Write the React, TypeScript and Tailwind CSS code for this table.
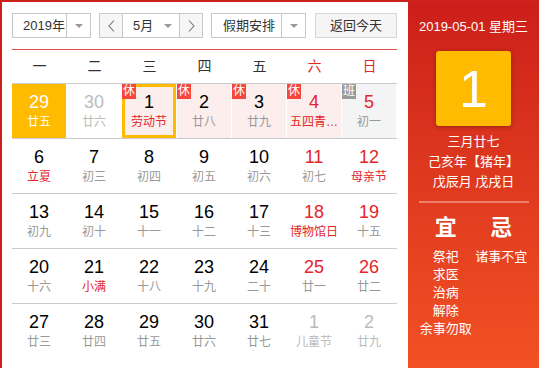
import React from "react";

type Day = {
  n: string;
  sub: string;
  num?: string;
  subc?: string;
  bg?: string;
  badge?: "休" | "班";
  selected?: boolean;
};

const BLACK = "text-black";
const GRAY = "text-[#999]";
const RED = "text-[#e4262b]";
const DIM = "text-[#bbb]";

const rows: Day[][] = [
  [
    { n: "29", sub: "廿五", num: "text-white", subc: "text-white", bg: "bg-[#ffbb00]" },
    { n: "30", sub: "廿六", num: DIM, subc: DIM },
    { n: "1", sub: "劳动节", subc: RED, bg: "bg-[#fdeeee]", badge: "休", selected: true },
    { n: "2", sub: "廿八", bg: "bg-[#fdeeee]", badge: "休" },
    { n: "3", sub: "廿九", bg: "bg-[#fdeeee]", badge: "休" },
    { n: "4", sub: "五四青…", num: RED, subc: RED, bg: "bg-[#fdeeee]", badge: "休" },
    { n: "5", sub: "初一", num: RED, bg: "bg-[#f4f4f4]", badge: "班" },
  ],
  [
    { n: "6", sub: "立夏", subc: RED },
    { n: "7", sub: "初三" },
    { n: "8", sub: "初四" },
    { n: "9", sub: "初五" },
    { n: "10", sub: "初六" },
    { n: "11", sub: "初七", num: RED },
    { n: "12", sub: "母亲节", num: RED, subc: RED },
  ],
  [
    { n: "13", sub: "初九" },
    { n: "14", sub: "初十" },
    { n: "15", sub: "十一" },
    { n: "16", sub: "十二" },
    { n: "17", sub: "十三" },
    { n: "18", sub: "博物馆日", num: RED, subc: RED },
    { n: "19", sub: "十五", num: RED },
  ],
  [
    { n: "20", sub: "十六" },
    { n: "21", sub: "小满", subc: RED },
    { n: "22", sub: "十八" },
    { n: "23", sub: "十九" },
    { n: "24", sub: "二十" },
    { n: "25", sub: "廿一", num: RED },
    { n: "26", sub: "廿二", num: RED },
  ],
  [
    { n: "27", sub: "廿三" },
    { n: "28", sub: "廿四" },
    { n: "29", sub: "廿五" },
    { n: "30", sub: "廿六" },
    { n: "31", sub: "廿七" },
    { n: "1", sub: "儿童节", num: DIM, subc: DIM },
    { n: "2", sub: "廿九", num: DIM, subc: DIM },
  ],
];

const Caret = () => (
  <svg width="8" height="4" viewBox="0 0 8 4">
    <path d="M0 0h8L4 4z" fill="#999" />
  </svg>
);

const Chevron = ({ left }: { left?: boolean }) => (
  <svg width="7" height="12" viewBox="0 0 7 12">
    <path
      d={left ? "M6 0.5L1 6l5 5.5" : "M1 0.5L6 6l-5 5.5"}
      fill="none"
      stroke="#777"
      strokeWidth="1.1"
    />
  </svg>
);

const Cell = ({ d }: { d: Day }) => (
  <div
    className={`relative mr-px h-[54px] pt-[8px] text-center ${d.bg ?? "bg-white"} ${
      d.selected ? "shadow-[inset_0_0_0_3px_#ffbb00]" : ""
    }`}
  >
    {d.badge && (
      <span
        className={`absolute left-0 top-0 h-[15px] w-[14px] text-[12px] leading-[15px] text-white ${
          d.badge === "休" ? "bg-[#f5473b]" : "bg-[#9a9a9a]"
        }`}
      >
        {d.badge}
      </span>
    )}
    <div className={`text-[18px] leading-[21px] ${d.num ?? BLACK}`}>{d.n}</div>
    <div className={`mt-px whitespace-nowrap text-[12px] leading-[16px] ${d.subc ?? GRAY}`}>{d.sub}</div>
  </div>
);

export default function App() {
  return (
    <div className="flex h-[368px] w-[539px] overflow-hidden border-l-2 border-t-2 border-[#cf211b] bg-white font-['Liberation_Sans','Noto_Sans_CJK_SC',sans-serif] text-[#333]">
      {/* left: calendar */}
      <div className="w-[406px] shrink-0 pl-[10px] pr-[11px] pt-[11px]">
        <div className="flex h-[25px] text-[13px]">
          <div className="flex w-[79px] border border-[#c8c8c8]">
            <div className="flex flex-1 items-center pl-[10px]">2019年</div>
            <div className="flex w-[24px] items-center justify-center border-l border-[#c8c8c8]">
              <Caret />
            </div>
          </div>
          <div className="ml-[8px] flex w-[104px] border border-[#c8c8c8]">
            <div className="flex w-[22px] items-center justify-center bg-[#f6f6f6]">
              <Chevron left />
            </div>
            <div className="flex flex-1 items-center justify-between border-x border-[#c8c8c8] bg-white pl-[10px] pr-[7px]">
              <span>5月</span>
              <Caret />
            </div>
            <div className="flex w-[22px] items-center justify-center bg-[#f6f6f6]">
              <Chevron />
            </div>
          </div>
          <div className="ml-[8px] flex w-[95px] border border-[#c8c8c8]">
            <div className="flex flex-1 items-center pl-[11px]">假期安排</div>
            <div className="flex w-[24px] items-center justify-center border-l border-[#c8c8c8]">
              <Caret />
            </div>
          </div>
          <div className="ml-[9px] flex flex-1 items-center justify-center border border-[#d6d6d6] bg-[#f5f5f5]">
            返回今天
          </div>
        </div>

        <div className="mt-[11px] h-px bg-[#e4514a]" />

        <div className="grid h-[33px] grid-cols-7 items-center text-center text-[14px]">
          {["一", "二", "三", "四", "五"].map((w) => (
            <span key={w}>{w}</span>
          ))}
          <span className="text-[#e4262b]">六</span>
          <span className="text-[#e4262b]">日</span>
        </div>

        {rows.map((r, i) => (
          <div key={i} className="grid grid-cols-7 border-t border-[#cbcbcb]">
            {r.map((d, j) => (
              <Cell key={j} d={d} />
            ))}
          </div>
        ))}
      </div>

      {/* right: detail panel */}
      <div className="flex flex-1 flex-col items-center bg-linear-to-b from-[#cc1e1a] to-[#f25024] pt-[15px] text-white">
        <div className="text-[13px] leading-[20px]">2019-05-01 星期三</div>
        <div className="mt-[14px] flex h-[75px] w-[75px] items-center justify-center rounded-[3px] bg-[#ffbb00] text-[52px] leading-none shadow-[0_1px_4px_rgba(0,0,0,0.3)]">
          1
        </div>
        <div className="mt-[6px] text-center text-[13px] leading-[20px]">
          <div>三月廿七</div>
          <div>己亥年【猪年】</div>
          <div>戊辰月 戊戌日</div>
        </div>
        <div className="mt-[9px] h-[2px] w-[110px] bg-white/35" />
        <div className="mt-[12px] grid w-full grid-cols-2 px-[10px] text-center">
          <div>
            <div className="text-[22px] font-bold leading-[26px]">宜</div>
            <div className="mt-[7px] text-[13px] leading-[18px]">
              <div>祭祀</div>
              <div>求医</div>
              <div>治病</div>
              <div>解除</div>
              <div className="whitespace-nowrap">余事勿取</div>
            </div>
          </div>
          <div>
            <div className="text-[22px] font-bold leading-[26px]">忌</div>
            <div className="mt-[7px] whitespace-nowrap text-[13px] leading-[18px]">诸事不宜</div>
          </div>
        </div>
      </div>
    </div>
  );
}
